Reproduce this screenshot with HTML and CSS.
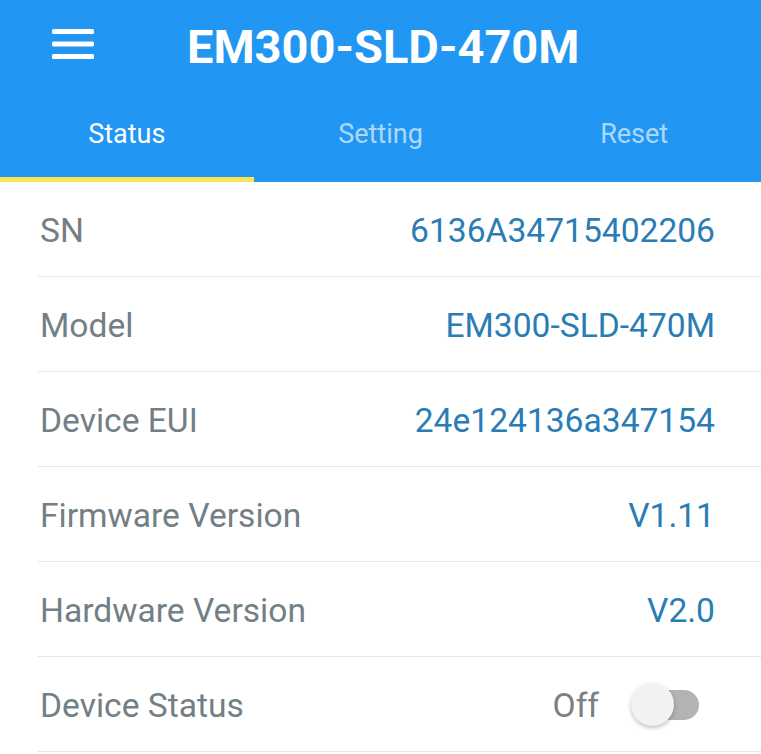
FILE: index.html
```html
<!DOCTYPE html>
<html>
<head>
<meta charset="utf-8">
<link rel="stylesheet" href="styles.css">
</head>
<body>
<header class="appbar">
  <div class="toolbar">
    <span class="menu">
      <svg width="42" height="30" viewBox="0 0 42 30"><rect x="0" y="0" width="42" height="5" rx="1.5" fill="#fff"/><rect x="0" y="12.5" width="42" height="5" rx="1.5" fill="#fff"/><rect x="0" y="25" width="42" height="5" rx="1.5" fill="#fff"/></svg>
    </span>
    <h1 class="title">EM300-SLD-470M</h1>
  </div>
  <nav class="tabs">
    <div class="tab active">Status</div>
    <div class="tab">Setting</div>
    <div class="tab">Reset</div>
  </nav>
</header>
<main class="list">
  <div class="row"><span class="label">SN</span><span class="value">6136A34715402206</span></div>
  <div class="row"><span class="label">Model</span><span class="value">EM300-SLD-470M</span></div>
  <div class="row"><span class="label">Device EUI</span><span class="value">24e124136a347154</span></div>
  <div class="row"><span class="label">Firmware Version</span><span class="value">V1.11</span></div>
  <div class="row"><span class="label">Hardware Version</span><span class="value">V2.0</span></div>
  <div class="row"><span class="label">Device Status</span><span class="status"><span class="off">Off</span><span class="switch"><span class="track"></span><span class="thumb"></span></span></span></div>
</main>
</body>
</html>
```
FILE: styles.css
```css
* { box-sizing: border-box; }
html, body { margin: 0; padding: 0; background: #fff; }
body { font-family: Roboto, "Noto Sans", "Liberation Sans", sans-serif; width: 761px; overflow: hidden; }
.appbar { background: #2196f3; color: #fff; }
.toolbar { height: 90px; display: flex; align-items: center; padding-left: 52px; }
.menu { display: flex; width: 42px; height: 30px; margin-top: -2px; }
.title { margin: 2px 0 0 93px; font-size: 47px; font-weight: 700; line-height: 1; }
.tabs { display: flex; height: 92px; }
.tab { flex: 1; display: flex; align-items: center; justify-content: center; font-size: 27px; color: rgba(255,255,255,0.65); padding-top: 1px; border-bottom: 5px solid transparent; }
.tab.active { color: #fff; border-bottom-color: #f9e552; }
.list { padding-left: 38px; }
.row { height: 95px; display: flex; align-items: center; justify-content: space-between; border-bottom: 1px solid #e4e6e7; padding-left: 2px; padding-right: 46px; padding-top: 2px; font-size: 33.6px; }
.label { color: #737f86; }
.value { color: #2a7db4; }
.status { display: flex; align-items: center; margin-right: 16px; }
.off { color: #7d8082; margin-right: 32px; }
.switch { position: relative; width: 68px; height: 44px; display: block; }
.track { position: absolute; left: 10px; top: 7px; width: 58px; height: 30px; border-radius: 15px; background: #b3b3b3; }
.thumb { position: absolute; left: 0; top: 0; width: 43px; height: 43px; border-radius: 50%; background: #f2f2f2; box-shadow: 0 2px 4px rgba(0,0,0,0.25); }
```
